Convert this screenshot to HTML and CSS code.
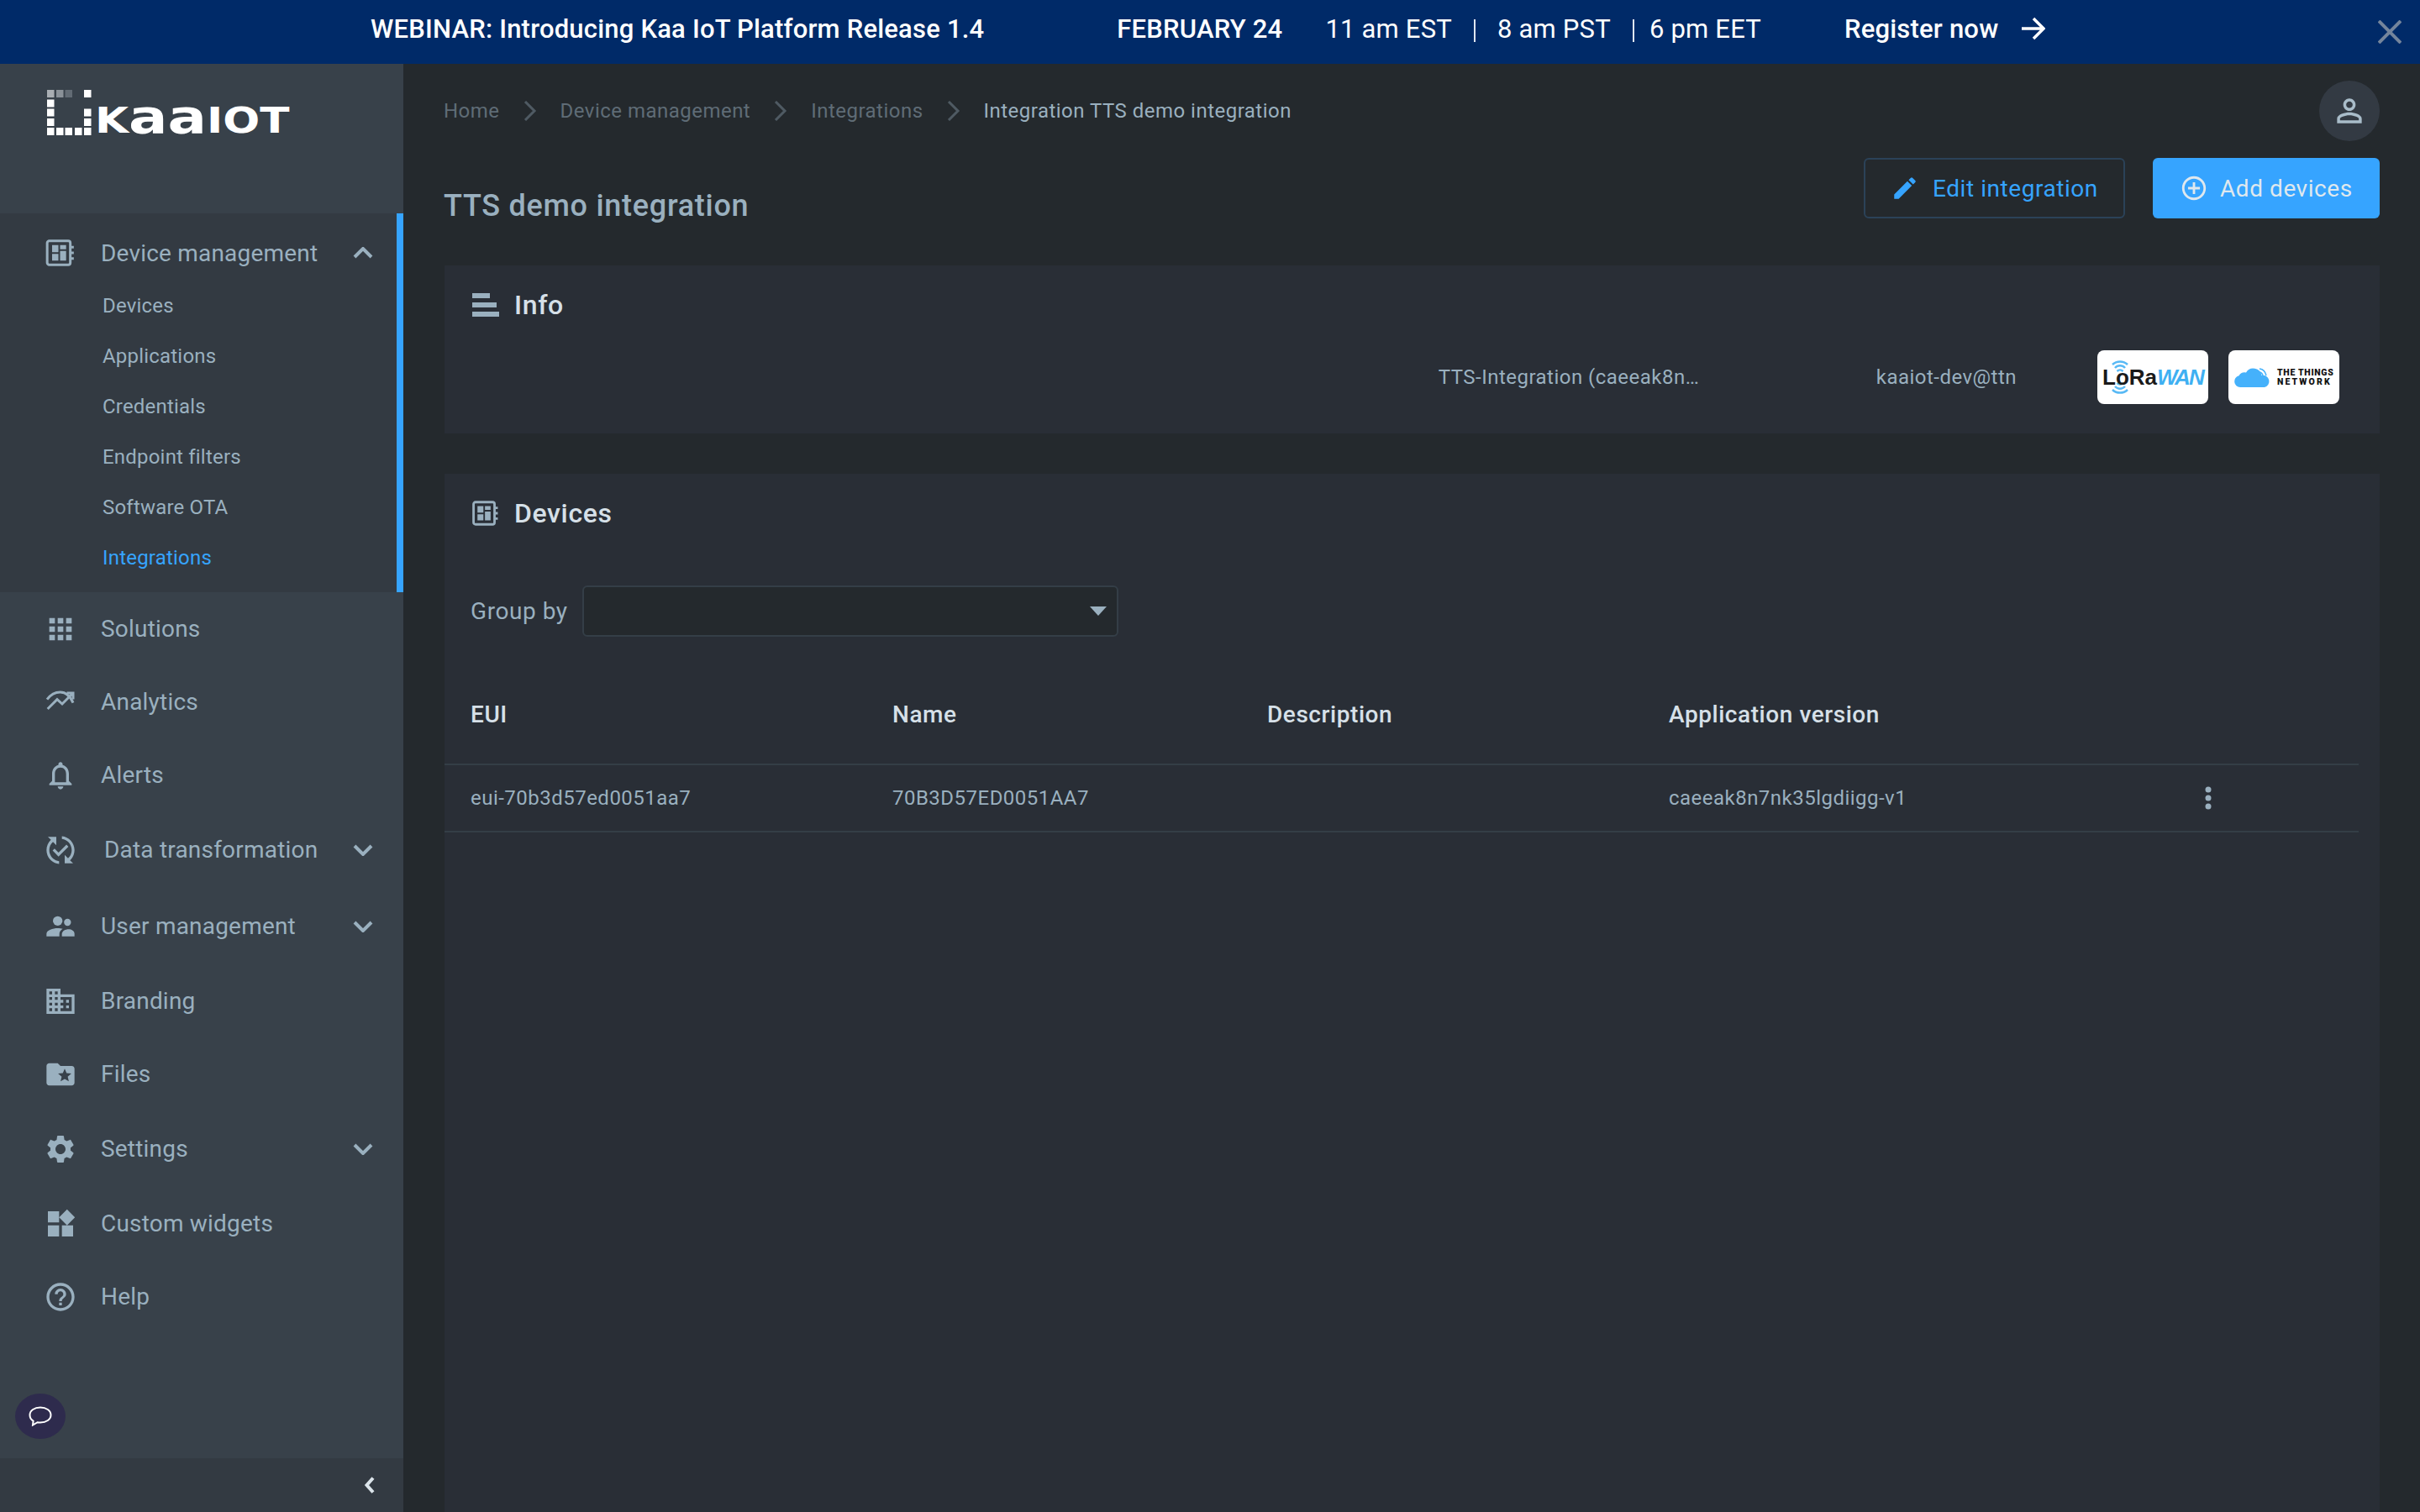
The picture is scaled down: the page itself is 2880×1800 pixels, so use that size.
FILE: index.html
```html
<!DOCTYPE html>
<html lang="en">
  <head>
    <meta charset="UTF-8" />
    <title>TTS demo integration</title>
    <link rel="stylesheet" href="styles.css">
  </head>
  <body>
    <div class="banner">
      <span class="banner-title">WEBINAR: Introducing Kaa IoT Platform Release 1.4</span>
      <span class="banner-date">FEBRUARY 24</span>
      <span class="banner-time">11 am EST</span>
      <span class="banner-sep"></span>
      <span class="banner-time">8 am PST</span>
      <span class="banner-sep"></span>
      <span class="banner-time">6 pm EET</span>
      <span class="banner-cta">Register now</span>
      <svg class="banner-arrow" viewBox="0 0 30 30"><path d="M2 15h25M16 3l12 12-12 12"/></svg>
      <svg class="banner-close" viewBox="0 0 28 28"><path d="M1 1l26 26M27 1L1 27"/></svg>
    </div>

    <div class="app">
      <aside class="sidebar">
        <div class="logo">
          <svg class="logo-mark" viewBox="0 0 53 54">
            <rect class="px-1" x="0" y="0" width="8.5" height="9"/>
            <rect class="px-2" x="11" y="0" width="8.5" height="9"/>
            <rect class="px-3" x="21.5" y="0" width="8.5" height="9"/>
            <rect x="44" y="0" width="8.5" height="9"/>
            <rect x="0" y="11.5" width="8.5" height="9"/>
            <rect x="0" y="22.5" width="8.5" height="9"/>
            <rect x="0" y="34" width="8.5" height="9"/>
            <rect x="0" y="45" width="8.5" height="9"/>
            <rect x="11" y="45" width="8.5" height="9"/>
            <rect x="21.5" y="45" width="8.5" height="9"/>
            <rect x="33" y="45" width="8.5" height="9"/>
            <rect x="44" y="45" width="8.5" height="9"/>
            <rect x="44" y="22.5" width="8.5" height="9"/>
            <rect x="44" y="34" width="8.5" height="9"/>
          </svg>
          <span class="logo-text"><span class="logo-cap">K</span><span class="logo-low">aa</span><span class="logo-cap">IOT</span></span>
        </div>

        <nav class="nav">
          <div class="nav-open">
            <a class="nav-head">
              <svg class="nav-icon" viewBox="0 0 24 24"><rect class="line" x="2.500" y="3.500" width="16.500" height="17" rx="1.500"/><path d="M6 6.500h4.500v5H6zM11.700 6.500H16v3h-4.300zM6 12.800h4.500v4.700H6zM11.700 10.700H16v6.800h-4.300z"/><path d="M19 7h2.500v1.800H19zM19 11.100h2.500v1.800H19zM19 15.200h2.500V17H19z"/></svg>
              <span class="nav-label">Device management</span>
              <svg class="nav-chevron" viewBox="0 0 24 14"><path d="M2 12L12 2l10 10"/></svg>
            </a>
            <ul class="subnav">
              <li>Devices</li>
              <li>Applications</li>
              <li>Credentials</li>
              <li>Endpoint filters</li>
              <li>Software OTA</li>
              <li class="active">Integrations</li>
            </ul>
          </div>

          <a class="nav-item">
            <svg class="nav-icon" viewBox="0 0 24 24"><path d="M4 8h4V4H4v4zm6 12h4v-4h-4v4zm-6 0h4v-4H4v4zm0-6h4v-4H4v4zm6 0h4v-4h-4v4zm6-10v4h4V4h-4zm-6 4h4V4h-4v4zm6 6h4v-4h-4v4zm0 6h4v-4h-4v4z"/></svg>
            <span class="nav-label">Solutions</span>
          </a>
          <a class="nav-item">
            <svg class="nav-icon" viewBox="0 0 24 24"><path class="line" d="M2.400 10C5 6.500 8.500 4.800 11.800 4.800c3.700 0 7 2.600 9.200 7.600"/><path class="line" d="M2.800 16.800L9.600 10l3.600 3.200L21 5.400M16.500 5.400H21v4.500"/></svg>
            <span class="nav-label">Analytics</span>
          </a>
          <a class="nav-item">
            <svg class="nav-icon" viewBox="0 0 24 24"><path d="M12 22c1.100 0 2-.9 2-2h-4c0 1.100.89 2 2 2zm6-6v-5c0-3.070-1.640-5.640-4.500-6.320V4c0-.83-.67-1.500-1.500-1.500s-1.500.67-1.500 1.500v.68C7.630 5.360 6 7.920 6 11v5l-2 2v1h16v-1l-2-2zm-2 1H8v-6c0-2.480 1.510-4.500 4-4.500s4 2.020 4 4.500v6z"/></svg>
            <span class="nav-label">Alerts</span>
          </a>
          <a class="nav-item has-sub">
            <svg class="nav-icon" viewBox="0 0 24 24"><path d="M17.660 9.530l-7.070 7.070-4.240-4.240 1.410-1.410 2.830 2.830 5.660-5.660 1.410 1.410zM4 12c0-2.330 1.020-4.420 2.620-5.880L9 8.500v-6H3l2.200 2.200C3.240 6.520 2 9.110 2 12c0 5.190 3.950 9.450 9 9.950v-2.020c-3.940-.49-7-3.860-7-7.930zm18 0c0-5.190-3.950-9.450-9-9.950v2.020c3.940.49 7 3.860 7 7.930 0 2.330-1.020 4.420-2.620 5.880L15 15.500v6h6l-2.200-2.200c1.960-1.820 3.200-4.410 3.200-7.300z"/></svg>
            <span class="nav-label nudge">Data transformation</span>
            <svg class="nav-chevron" viewBox="0 0 24 14"><path d="M2 2l10 10L22 2"/></svg>
          </a>
          <a class="nav-item has-sub">
            <svg class="nav-icon" viewBox="0 0 24 24"><circle cx="10" cy="8" r="3.400"/><circle cx="17" cy="9" r="2.500"/><path d="M2 19v-1.800c0-2.600 4.600-4 8-4 1.300 0 2.600.2 3.600.5-1.500.9-2.400 2.200-2.400 3.700V19H2zM13 19v-1.500c0-2.400 2.500-3.600 4.700-3.600 2.200 0 4.300 1.200 4.300 3.200V19h-9z"/></svg>
            <span class="nav-label">User management</span>
            <svg class="nav-chevron" viewBox="0 0 24 14"><path d="M2 2l10 10L22 2"/></svg>
          </a>
          <a class="nav-item">
            <svg class="nav-icon" viewBox="0 0 24 24"><path d="M12 7V3H2v18h20V7H12zM6 19H4v-2h2v2zm0-4H4v-2h2v2zm0-4H4V9h2v2zm0-4H4V5h2v2zm4 12H8v-2h2v2zm0-4H8v-2h2v2zm0-4H8V9h2v2zm0-4H8V5h2v2zm10 12h-8v-2h2v-2h-2v-2h2v-2h-2V9h8v10zm-2-8h-2v2h2v-2zm0 4h-2v2h2v-2z"/></svg>
            <span class="nav-label">Branding</span>
          </a>
          <a class="nav-item">
            <svg class="nav-icon" viewBox="0 0 24 24"><path d="M20 6h-8l-2-2H4c-1.100 0-1.990.9-1.990 2L2 18c0 1.100.9 2 2 2h16c1.100 0 2-.9 2-2V8c0-1.100-.9-2-2-2zm-2.060 11L15 15.280 12.060 17l.78-3.330-2.590-2.240 3.410-.29L15 8l1.340 3.140 3.410.29-2.590 2.240.78 3.330z"/></svg>
            <span class="nav-label">Files</span>
          </a>
          <a class="nav-item has-sub">
            <svg class="nav-icon" viewBox="0 0 24 24"><path d="M19.140 12.940c.04-.3.06-.61.06-.94 0-.32-.02-.64-.07-.94l2.030-1.580c.18-.14.23-.41.12-.61l-1.920-3.320c-.12-.22-.37-.29-.59-.22l-2.390.96c-.5-.38-1.030-.7-1.620-.94l-.36-2.540c-.04-.24-.24-.41-.48-.41h-3.840c-.24 0-.43.17-.47.41l-.36 2.540c-.59.24-1.130.57-1.620.94l-2.390-.96c-.22-.08-.47 0-.59.22L2.740 8.870c-.12.21-.08.47.12.61l2.030 1.580c-.05.3-.09.63-.09.94s.02.64.07.94l-2.030 1.580c-.18.14-.23.41-.12.61l1.920 3.320c.12.22.37.29.59.22l2.390-.96c.5.38 1.030.7 1.620.94l.36 2.540c.05.24.24.41.48.41h3.840c.24 0 .44-.17.47-.41l.36-2.540c.59-.24 1.130-.56 1.620-.94l2.390.96c.22.08.47 0 .59-.22l1.920-3.320c.12-.22.07-.47-.12-.61l-2.010-1.580zM12 15.600c-1.980 0-3.600-1.620-3.600-3.600s1.620-3.600 3.600-3.600 3.600 1.620 3.600 3.600-1.620 3.600-3.600 3.600z"/></svg>
            <span class="nav-label">Settings</span>
            <svg class="nav-chevron" viewBox="0 0 24 14"><path d="M2 2l10 10L22 2"/></svg>
          </a>
          <a class="nav-item">
            <svg class="nav-icon" viewBox="0 0 24 24"><path d="M13 13v8h8v-8h-8zM3 21h8v-8H3v8zM3 3v8h8V3H3zm13.660-1.310L11 7.340 16.660 13l5.660-5.660-5.660-5.650z"/></svg>
            <span class="nav-label">Custom widgets</span>
          </a>
          <a class="nav-item">
            <svg class="nav-icon" viewBox="0 0 24 24"><path d="M11 18h2v-2h-2v2zm1-16C6.480 2 2 6.480 2 12s4.480 10 10 10 10-4.480 10-10S17.520 2 12 2zm0 18c-4.410 0-8-3.590-8-8s3.590-8 8-8 8 3.590 8 8-3.590 8-8 8zm0-14c-2.210 0-4 1.790-4 4h2c0-1.100.9-2 2-2s2 .9 2 2c0 2-3 1.750-3 5h2c0-2.250 3-2.500 3-5 0-2.210-1.790-4-4-4z"/></svg>
            <span class="nav-label">Help</span>
          </a>
        </nav>

        <div class="chat-bubble">
          <svg viewBox="0 0 28 24"><path d="M14 1.500c7 0 12.500 3.600 12.500 9s-5.500 9-12.500 9c-1.200 0-2.300-.1-3.400-.3L5 22.500l.6-4.800C3 16.100 1.500 13.500 1.500 10.500c0-5.400 5.500-9 12.500-9z"/></svg>
        </div>

        <div class="sidebar-foot">
          <svg viewBox="0 0 14 22"><path d="M11 2.500L3.500 11l7.500 8.500"/></svg>
        </div>
      </aside>

      <main class="main">
        <div class="topbar">
          <div class="crumbs">
            <span>Home</span>
            <svg class="crumb-sep" viewBox="0 0 16 24"><path d="M2 1l11 11L2 23"/></svg>
            <span>Device management</span>
            <svg class="crumb-sep" viewBox="0 0 16 24"><path d="M2 1l11 11L2 23"/></svg>
            <span>Integrations</span>
            <svg class="crumb-sep" viewBox="0 0 16 24"><path d="M2 1l11 11L2 23"/></svg>
            <span class="crumb-current">Integration TTS demo integration</span>
          </div>
          <div class="avatar">
            <svg viewBox="0 0 24 24"><path d="M12 5.900c1.160 0 2.100.94 2.100 2.100s-.94 2.100-2.100 2.100S9.900 9.160 9.900 8s.94-2.100 2.100-2.100m0 9c2.970 0 6.100 1.460 6.100 2.100v1.100H5.900V17c0-.64 3.130-2.100 6.100-2.100M12 4C9.790 4 8 5.790 8 8s1.790 4 4 4 4-1.790 4-4-1.790-4-4-4zm0 9c-2.670 0-8 1.340-8 4v3h16v-3c0-2.660-5.330-4-8-4z"/></svg>
          </div>
        </div>

        <div class="title-row">
          <h1>TTS demo integration</h1>
          <div class="actions">
            <button class="btn btn-outline">
              <svg viewBox="0 0 24 24"><path d="M3 17.250V21h3.750L17.810 9.940l-3.750-3.750L3 17.250zM20.710 7.040a.996.996 0 0 0 0-1.410l-2.340-2.340a.996.996 0 0 0-1.410 0l-1.830 1.830 3.750 3.750 1.830-1.830z"/></svg>
              Edit integration
            </button>
            <button class="btn btn-primary">
              <svg viewBox="0 0 24 24"><path d="M13 7h-2v4H7v2h4v4h2v-4h4v-2h-4V7zm-1-5C6.480 2 2 6.480 2 12s4.480 10 10 10 10-4.480 10-10S17.520 2 12 2zm0 18c-4.410 0-8-3.590-8-8s3.590-8 8-8 8 3.590 8 8-3.590 8-8 8z"/></svg>
              Add devices
            </button>
          </div>
        </div>

        <section class="card card-info">
          <div class="card-title">
            <svg class="card-icon" viewBox="0 0 32 28"><path d="M0 0h21v6H0zM0 11h29v6H0zM0 22h32v6H0z"/></svg>
            <h2>Info</h2>
          </div>
          <div class="info-row">
            <span class="info-name">TTS-Integration (caeeak8n…</span>
            <span class="info-user">kaaiot-dev@ttn</span>
            <div class="badge">
              <svg class="lora-waves" viewBox="0 0 24 40"><path d="M3 5a13 13 0 0 1 18 0M6 9a8 8 0 0 1 12 0M8.500 13a5 5 0 0 1 7 0M8.500 27a5 5 0 0 0 7 0M6 31a8 8 0 0 0 12 0M3 35a13 13 0 0 0 18 0"/></svg>
              <span class="lora-text">LoRa<i>WAN</i></span>
            </div>
            <div class="badge">
              <svg class="ttn-cloud" viewBox="0 0 44 26"><path d="M8 25a7 7 0 0 1-1.500-13.800A7 7 0 0 1 15 7.500 10 10 0 0 1 33.500 11 7 7 0 0 1 37 25z"/><path class="ttn-wave" d="M31 3c4 .5 7 3.500 8 8M31 7c2 .3 3.500 1.800 4 4"/></svg>
              <span class="ttn-text">THE THINGS<br><span>NETWORK</span></span>
            </div>
          </div>
        </section>

        <section class="card card-devices">
          <div class="card-title">
            <svg class="card-icon" viewBox="2 2.500 20.500 19"><rect class="line" x="3" y="3.500" width="16" height="17" rx="1.500"/><path d="M6 6.500h4.500v5H6zM11.700 6.500H16v3h-4.300zM6 12.800h4.500v4.700H6zM11.700 10.700H16v6.800h-4.300z"/><path d="M19 7h2.500v1.800H19zM19 11.100h2.500v1.800H19zM19 15.200h2.500V17H19z"/></svg>
            <h2>Devices</h2>
          </div>
          <div class="group-by">
            <label>Group by</label>
            <div class="select"><span class="caret"></span></div>
          </div>
          <div class="table">
            <div class="table-row table-head">
              <span>EUI</span>
              <span>Name</span>
              <span>Description</span>
              <span>Application version</span>
            </div>
            <div class="table-row table-body">
              <span>eui-70b3d57ed0051aa7</span>
              <span>70B3D57ED0051AA7</span>
              <span></span>
              <span>caeeak8n7nk35lgdiigg-v1</span>
              <svg class="kebab" viewBox="0 0 36 36"><circle cx="18" cy="8" r="3.500"/><circle cx="18" cy="18" r="3.500"/><circle cx="18" cy="28" r="3.500"/></svg>
            </div>
          </div>
        </section>
      </main>
    </div>
  </body>
</html>
```

FILE: styles.css
```css
/* General */
* {
  box-sizing: border-box;
}

html,
body {
  height: 100%;
}

body {
  margin: 0;
  font-family: Roboto, "Liberation Sans", sans-serif;
  background: #24292d;
  color: #9ab0bf;
  overflow: hidden;
  display: flex;
  flex-direction: column;
}

/* Banner */
.banner {
  height: 76px;
  flex: none;
  background: #002a68;
  color: #fff;
  font-size: 31px;
  letter-spacing: 0.200px;
  padding-left: 441px;
  padding-bottom: 8px;
  display: flex;
  align-items: center;
  position: relative;
}

.banner-title {
  font-weight: 500;
}

.banner-date {
  font-weight: 500;
  margin-left: 158px;
  margin-right: 51px;
}

.banner-sep {
  width: 2px;
  height: 27px;
  background: #dfe6f0;
  margin: 5px 26px 0;
}

.banner-sep + .banner-time + .banner-sep {
  margin: 5px 18px 0 26px;
}

.banner-cta {
  font-weight: 500;
  margin-left: 99px;
}

.banner-arrow {
  width: 30px;
  height: 30px;
  margin-left: 26px;
  fill: none;
  stroke: #fff;
  stroke-width: 3.500;
}

.banner-close {
  position: absolute;
  left: 2830px;
  top: 24px;
  width: 28px;
  height: 28px;
  fill: none;
  stroke: #74859c;
  stroke-width: 4;
}

.app {
  flex: 1;
  min-height: 0;
  display: flex;
}

/* Sidebar */
.sidebar {
  width: 480px;
  flex: none;
  background: #38414a;
  display: flex;
  flex-direction: column;
  position: relative;
}

.logo {
  height: 178px;
  flex: none;
  padding: 31px 0 0 56px;
  display: flex;
  align-items: flex-start;
}

.logo-mark {
  width: 53px;
  height: 54px;
  fill: #fff;
}

.logo-mark .px-1 {
  fill: #a9aeb3;
}

.logo-mark .px-2 {
  fill: #8a9198;
}

.logo-mark .px-3 {
  fill: #626b74;
}

.logo-text {
  font-family: "DejaVu Sans", sans-serif;
  font-weight: 700;
  color: #fff;
  display: inline-block;
  margin: 10px 0 0 4px;
  line-height: 44px;
  transform: scaleX(1.230);
  transform-origin: left center;
  white-space: nowrap;
}

.logo-cap {
  font-size: 42px;
}

.logo-low {
  font-size: 56px;
}

.nav {
  flex: 1;
  min-height: 0;
}

.nav a {
  display: flex;
  align-items: center;
  padding-left: 52px;
}

.nav-open {
  background: #333a42;
  border-right: 8px solid #36a4ff;
  height: 451px;
}

.nav-head {
  height: 94px;
}

.nav-item {
  height: 87px;
}

.nav-item.has-sub {
  height: 91px;
}

.nav-icon {
  width: 40px;
  height: 40px;
  flex: none;
  fill: #9ab0bf;
}

.nav-icon .line {
  fill: none;
  stroke: #9ab0bf;
  stroke-width: 1.800;
}

.nav-label {
  font-size: 28px;
  letter-spacing: 0.200px;
  margin-left: 28px;
  white-space: nowrap;
}

.nav-label.nudge {
  margin-left: 32px;
}

.nav-chevron {
  position: absolute;
  left: 420px;
  width: 24px;
  height: 14px;
  fill: none;
  stroke: #9ab0bf;
  stroke-width: 4;
}

.subnav {
  list-style: none;
  margin: 0;
  padding: 0 0 0 122px;
  display: flex;
  flex-direction: column;
  gap: 28px;
}

.subnav li {
  font-size: 24px;
  line-height: 32px;
  letter-spacing: 0.200px;
}

.subnav .active {
  color: #36a4ff;
}

.chat-bubble {
  position: absolute;
  left: 18px;
  top: 1583px;
  width: 60px;
  height: 54px;
  border-radius: 50%;
  background: #2e2b4d;
  display: flex;
  align-items: center;
  justify-content: center;
}

.chat-bubble svg {
  width: 28px;
  height: 24px;
  fill: none;
  stroke: #fff;
  stroke-width: 2;
}

.sidebar-foot {
  height: 64px;
  flex: none;
  background: #333a42;
  display: flex;
  align-items: center;
  justify-content: flex-end;
  padding-right: 33px;
}

.sidebar-foot svg {
  width: 14px;
  height: 22px;
  fill: none;
  stroke: #dbe4ea;
  stroke-width: 4;
}

/* Main */
.main {
  flex: 1;
  min-width: 0;
  padding: 20px 48px 0;
  display: flex;
  flex-direction: column;
}

.topbar {
  height: 72px;
  flex: none;
  display: flex;
  align-items: center;
  justify-content: space-between;
}

.crumbs {
  display: flex;
  align-items: center;
  gap: 28px;
  font-size: 24px;
  letter-spacing: 0.480px;
  color: #5f6c76;
}

.crumb-sep {
  width: 16px;
  height: 24px;
  fill: none;
  stroke: #4f5a63;
  stroke-width: 3;
}

.crumb-current {
  color: #9ab0bf;
}

.avatar {
  width: 72px;
  height: 72px;
  border-radius: 50%;
  background: #333a43;
  display: flex;
  align-items: center;
  justify-content: center;
}

.avatar svg {
  width: 44px;
  height: 44px;
  fill: #a9bcc9;
}

.title-row {
  height: 72px;
  flex: none;
  margin: 20px 0 56px;
  display: flex;
  align-items: center;
  justify-content: space-between;
}

h1 {
  margin: 42px 0 0;
  font-size: 36px;
  font-weight: 500;
  letter-spacing: 0.720px;
  color: #9ab0bf;
}

.actions {
  display: flex;
  gap: 33px;
}

.btn {
  height: 72px;
  font-family: inherit;
  font-size: 28px;
  letter-spacing: 0.560px;
  border-radius: 6px;
  display: flex;
  align-items: center;
  gap: 16px;
}

.btn svg {
  width: 34px;
  height: 34px;
  fill: currentColor;
}

.btn-outline {
  width: 311px;
  padding: 0 0 0 30px;
  background: transparent;
  border: 2px solid #2b4258;
  color: #36a4ff;
}

.btn-primary {
  width: 270px;
  padding: 0 0 0 32px;
  gap: 14px;
  background: #36a4ff;
  border: none;
  color: #dfe8ee;
}

/* Cards */
.card {
  background: #292e36;
  margin-left: 1px;
}

.card-info {
  height: 200px;
  flex: none;
  margin-bottom: 48px;
}

.card-devices {
  flex: 1;
  min-height: 0;
}

.card-title {
  height: 94px;
  padding-left: 33px;
  display: flex;
  align-items: center;
  gap: 18px;
}

.card-icon {
  width: 32px;
  height: 30px;
  fill: #9ab0bf;
}

.card-icon .line {
  fill: none;
  stroke: #9ab0bf;
  stroke-width: 1.800;
}

h2 {
  margin: 0;
  font-size: 32px;
  font-weight: 500;
  letter-spacing: 0.640px;
  color: #d6e0e8;
}

.info-row {
  margin-top: 7px;
  padding-right: 48px;
  display: flex;
  align-items: center;
  justify-content: flex-end;
  gap: 24px;
  font-size: 24px;
  letter-spacing: 0.480px;
}

.info-name {
  width: 310px;
  white-space: nowrap;
  margin-right: 187px;
}

.info-user {
  margin-right: 72px;
}

.badge {
  width: 132px;
  height: 64px;
  border-radius: 8px;
  background: #fff;
  letter-spacing: normal;
  position: relative;
  display: flex;
  align-items: center;
}

.lora-waves {
  position: absolute;
  left: 15px;
  top: 12px;
  width: 24px;
  height: 40px;
  fill: none;
  stroke: #58b9f5;
  stroke-width: 2.500;
}

.lora-text {
  font-family: "Liberation Sans", sans-serif;
  font-size: 26px;
  font-weight: 700;
  color: #1a1a1a;
  padding-left: 6px;
  position: relative;
}

.lora-text i {
  color: #3fb0f2;
  letter-spacing: -2px;
}

.ttn-cloud {
  width: 44px;
  height: 26px;
  margin-left: 6px;
  flex: none;
  fill: #45b1fb;
}

.ttn-cloud .ttn-wave {
  fill: none;
  stroke: #45b1fb;
  stroke-width: 1.500;
}

.ttn-text {
  font-size: 10.500px;
  font-weight: 900;
  line-height: 11px;
  color: #111;
  margin-left: 8px;
  white-space: nowrap;
  letter-spacing: 0.700px;
}

.ttn-text span {
  letter-spacing: 2.100px;
}

.group-by {
  margin-top: 39px;
  padding-left: 31px;
  display: flex;
  align-items: center;
  gap: 17px;
  font-size: 28px;
  letter-spacing: 0.560px;
}

.select {
  width: 638px;
  height: 61px;
  background: #24292d;
  border: 2px solid #343e47;
  border-radius: 6px;
  display: flex;
  align-items: center;
  justify-content: flex-end;
  padding-right: 12px;
}

.caret {
  width: 0;
  height: 0;
  border-left: 10px solid transparent;
  border-right: 10px solid transparent;
  border-top: 11px solid #9ab0bf;
}

.table {
  margin-top: 33px;
  width: 2278px;
}

.table-row {
  padding-left: 31px;
  display: grid;
  grid-template-columns: 502px 446px 478px 624px 36px;
  align-items: center;
  border-bottom: 2px solid #343e46;
}

.table-head {
  height: 120px;
  font-size: 28px;
  font-weight: 500;
  letter-spacing: 0.560px;
  color: #d6e0e8;
}

.table-body {
  height: 80px;
  font-size: 24px;
  letter-spacing: 0.480px;
}

.kebab {
  width: 36px;
  height: 36px;
  fill: #9ab0bf;
}
```
